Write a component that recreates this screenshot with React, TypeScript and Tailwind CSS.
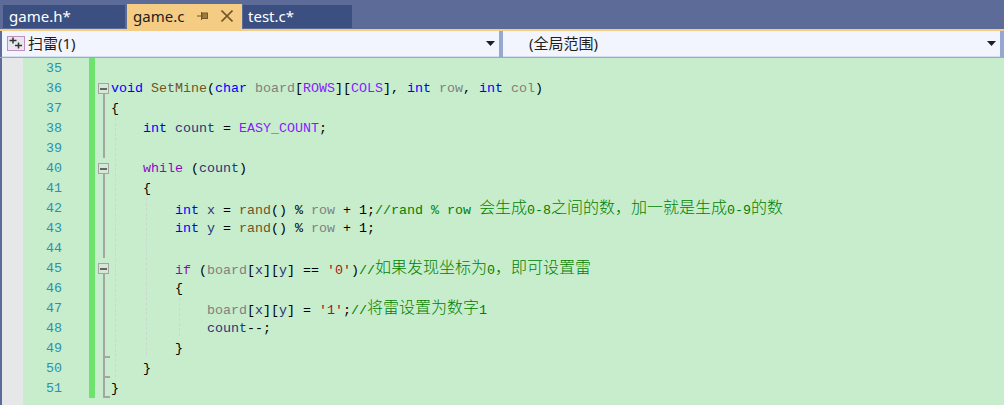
import React from "react";

const K = "text-[#0000ff]";
const C = "text-[#8f08c4]";
const F = "text-[#74531f]";
const P = "text-[#808080]";
const M = "text-[#8a1bff]";
const V = "text-[#1f377f]";
const G = "text-[#008000]";
const S = "text-[#a31515]";
const N = "text-black";

type Tok = [string, string];
type Fold = "box" | "line" | "end" | "none";
type Row = { n: number; fold: Fold; toks: Tok[] };

const cjk = /([\u3000-\u9fff\uff00-\uffef]+)/;

function Text({ t }: { t: string }) {
  return (
    <>
      {t.split(cjk).map((part, i) =>
        cjk.test(part) ? (
          <span key={i} className="relative top-[-1px] text-[16px] font-light font-['Noto_Sans_CJK_SC',monospace] leading-none">
            {part}
          </span>
        ) : (
          <span key={i}>{part}</span>
        )
      )}
    </>
  );
}

const rows: Row[] = [
  { n: 35, fold: "none", toks: [] },
  { n: 36, fold: "box", toks: [[K, "void"], [N, " "], [F, "SetMine"], [N, "("], [K, "char"], [N, " "], [P, "board"], [N, "["], [M, "ROWS"], [N, "]["], [M, "COLS"], [N, "], "], [K, "int"], [N, " "], [P, "row"], [N, ", "], [K, "int"], [N, " "], [P, "col"], [N, ")"]] },
  { n: 37, fold: "line", toks: [[N, "{"]] },
  { n: 38, fold: "line", toks: [[N, "    "], [K, "int"], [N, " "], [V, "count"], [N, " = "], [M, "EASY_COUNT"], [N, ";"]] },
  { n: 39, fold: "line", toks: [] },
  { n: 40, fold: "box", toks: [[N, "    "], [C, "while"], [N, " ("], [V, "count"], [N, ")"]] },
  { n: 41, fold: "line", toks: [[N, "    {"]] },
  { n: 42, fold: "line", toks: [[N, "        "], [K, "int"], [N, " "], [V, "x"], [N, " = "], [F, "rand"], [N, "() % "], [P, "row"], [N, " + 1;"], [G, "//rand % row 会生成0-8之间的数，加一就是生成0-9的数"]] },
  { n: 43, fold: "line", toks: [[N, "        "], [K, "int"], [N, " "], [V, "y"], [N, " = "], [F, "rand"], [N, "() % "], [P, "row"], [N, " + 1;"]] },
  { n: 44, fold: "line", toks: [] },
  { n: 45, fold: "box", toks: [[N, "        "], [C, "if"], [N, " ("], [P, "board"], [N, "["], [V, "x"], [N, "]["], [V, "y"], [N, "] == "], [S, "'0'"], [N, ")"], [G, "//如果发现坐标为0，即可设置雷"]] },
  { n: 46, fold: "line", toks: [[N, "        {"]] },
  { n: 47, fold: "line", toks: [[N, "            "], [P, "board"], [N, "["], [V, "x"], [N, "]["], [V, "y"], [N, "] = "], [S, "'1'"], [N, ";"], [G, "//将雷设置为数字1"]] },
  { n: 48, fold: "line", toks: [[N, "            "], [V, "count"], [N, "--;"]] },
  { n: 49, fold: "end", toks: [[N, "        }"]] },
  { n: 50, fold: "end", toks: [[N, "    }"]] },
  { n: 51, fold: "end", toks: [[N, "}"]] },
];

function FoldCell({ kind }: { kind: Fold }) {
  if (kind === "none") return <div className="relative h-5 w-4" />;
  return (
    <div className="relative h-5 w-4">
      {kind === "box" ? (
        <>
          <div className="absolute left-[3px] top-[5px] flex h-[11px] w-[11px] items-center justify-center border border-[#a5a5a5] bg-[#d4e8d4]">
            <div className="h-[2px] w-[7px] bg-[#666666]" />
          </div>
          <div className="absolute left-[8px] top-[16px] h-[4px] w-[2px] bg-[#a5a5a5]" />
        </>
      ) : (
        <div className="absolute left-[8px] top-0 h-5 w-[2px] bg-[#a5a5a5]" />
      )}
      {kind === "end" && <div className="absolute left-[8px] top-[18px] h-[2px] w-[7px] bg-[#a5a5a5]" />}
    </div>
  );
}

function ComboArrow() {
  return (
    <svg width="9" height="5" viewBox="0 0 9 5" className="shrink-0">
      <path d="M0 0h9L4.5 5z" fill="#1e1e1e" />
    </svg>
  );
}

export default function App() {
  return (
    <div className="flex h-[405px] w-[1004px] flex-col overflow-hidden bg-[#5d6b99] font-['Noto_Sans','Noto_Sans_CJK_SC',sans-serif]">
      {/* tab strip */}
      <div className="flex h-[29px] shrink-0 items-start pl-[3px] pt-[4px] text-[15px]">
        <div className="mr-[2px] mt-px flex h-[23px] w-[122px] items-center bg-[#3b4f81] pl-[6px] text-white">game.h*</div>
        <div className="mr-px flex h-[27px] w-[115px] items-center bg-[#f5cc84] pl-[6px] pb-[3px] text-[#1e1e1e]">
          game.c
          <svg width="11" height="10" viewBox="0 0 11 10" className="ml-[13px] shrink-0" fill="none">
            <path d="M0 5h4" stroke="#75582a" />
            <path d="M4.5 1v8" stroke="#75582a" />
            <rect x="5" y="2" width="5.5" height="5.5" fill="#a07c3e" stroke="#75582a" />
          </svg>
          <svg width="12" height="12" viewBox="0 0 12 12" className="ml-[13px] shrink-0" fill="none" stroke="#75582a" strokeWidth="1.6">
            <path d="M0.5 0.5l11 11M11.5 0.5l-11 11" />
          </svg>
        </div>
        <div className="mt-px flex h-[23px] w-[109px] items-center bg-[#3b4f81] pl-[5px] text-white">test.c*</div>
      </div>
      <div className="h-[2px] shrink-0 bg-[#f5cc84]" />

      {/* navigation bar */}
      <div className="flex h-[27px] shrink-0 border-b border-[#9aa7cf] pl-[2px] text-[15px] text-[#1e1e1e]">
        <div className="flex w-[497px] items-center border-b border-[#d5ddf2] bg-[#f2f5fe] pl-[5px] pr-[4px]">
          <svg width="18" height="15" viewBox="0 0 18 15" className="shrink-0">
            <rect x="0.5" y="0.5" width="17" height="14" fill="#e9e7ee" stroke="#bf8fbf" />
            <path d="M2.5 4.5h7M6 1.5v6M8 9.5h7M11.5 6.5v6" stroke="#333333" strokeWidth="1.5" fill="none" />
          </svg>
          <span className="ml-[3px]">扫雷(1)</span>
          <span className="flex-1" />
          <ComboArrow />
        </div>
        <div className="w-[4px] bg-[#96a8cf]" />
        <div className="flex w-[497px] items-center border-b border-[#d5ddf2] bg-[#f2f5fe] pl-[26px] pr-[4px]">
          <span>(全局范围)</span>
          <span className="flex-1" />
          <ComboArrow />
        </div>
        <div className="w-[4px] bg-[#96a8cf]" />
      </div>

      {/* editor */}
      <div className="flex min-h-0 flex-1 pl-[2px]">
        <div className="w-[21px] shrink-0 bg-[#e6e7e8]" />
        <div className="flex min-w-0 flex-1 items-start bg-[#c7edcc] font-['Liberation_Mono',monospace] text-[13.33px] leading-5">
          <div className="w-[39px] shrink-0 text-right text-[#2b91af]">
            {rows.map((r) => (
              <div key={r.n} className="h-5 pt-px">{r.n}</div>
            ))}
          </div>
          <div className="ml-[27px] h-[340px] w-[6px] shrink-0 bg-[#6de26d]" />
          <div className="w-4 shrink-0">
            {rows.map((r) => (
              <FoldCell key={r.n} kind={r.fold} />
            ))}
          </div>
          <div className="relative flex-1">
            <div className="absolute left-[4px] top-[60px] h-[259px] border-l border-dashed border-[#cdd6cf]" />
            <div className="absolute left-[35px] top-[140px] h-[157px] border-l border-dashed border-[#cdd6cf]" />
            <div className="absolute left-[68px] top-[240px] h-[38px] border-l border-dashed border-[#cdd6cf]" />
            {rows.map((r) => (
              <div key={r.n} className="relative h-5 whitespace-pre pt-px">
                {r.toks.map(([c, t], i) => (
                  <span key={i} className={c}>
                    <Text t={t} />
                  </span>
                ))}
              </div>
            ))}
          </div>
        </div>
      </div>
    </div>
  );
}
